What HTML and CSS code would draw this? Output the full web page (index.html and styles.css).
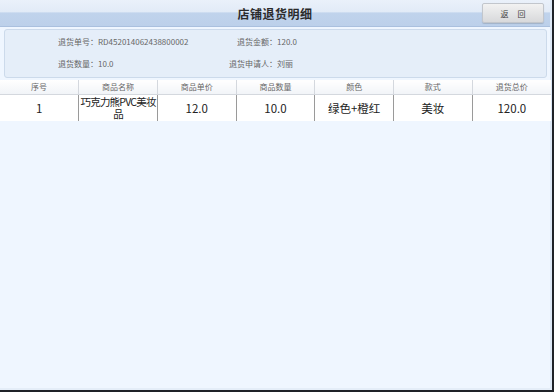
FILE: index.html
```html
<!DOCTYPE html>
<html lang="zh-CN">

<head>
    <meta charset="UTF-8">
    <meta name="viewport" content="width=device-width, initial-scale=1.0">
    <title>店铺退货明细</title>
    <link rel="stylesheet" href="styles.css">
</head>

<body>
    <div class="screen">
        <div class="title-bar">
            <h1>店铺退货明细</h1>
            <button class="back-btn">返<span class="gap"></span>回</button>
        </div>

        <div class="info-panel">
            <div class="info-row">
                <span class="info-left">退货单号：RD452014062438800002</span>
                <span class="info-label">退货金额：</span><span>120.0</span>
            </div>
            <div class="info-row">
                <span class="info-left">退货数量：10.0</span>
                <span class="info-label">退货申请人：</span><span>刘丽</span>
            </div>
        </div>

        <table class="detail-table">
            <thead>
                <tr>
                    <th>序号</th>
                    <th>商品名称</th>
                    <th>商品单价</th>
                    <th>商品数量</th>
                    <th>颜色</th>
                    <th>款式</th>
                    <th>退货总价</th>
                </tr>
            </thead>
            <tbody>
                <tr>
                    <td>1</td>
                    <td class="name-cell">巧克力熊PVC美妆品</td>
                    <td>12.0</td>
                    <td>10.0</td>
                    <td>绿色+橙红</td>
                    <td>美妆</td>
                    <td>120.0</td>
                </tr>
            </tbody>
        </table>
    </div>
</body>

</html>
```

FILE: styles.css
```css
* {
    box-sizing: border-box;
}

html,
body {
    margin: 0;
    padding: 0;
    height: 100%;
}

body {
    font-family: 'Noto Sans CJK SC', 'Noto Sans', sans-serif;
    background-color: #1f2228;
    color: #333;
}

.screen {
    width: 552px;
    height: 390px;
    background-color: #eff6ff;
    border-right: 2px solid #dde8f6;
    border-bottom: 2px solid #e4edf8;
}

.title-bar {
    height: 27px;
    display: flex;
    align-items: center;
    justify-content: center;
    position: relative;
    background: linear-gradient(to bottom, #eaf1fa 0%, #e2ebf7 45%, #c0d3ec 50%, #bcd0ea 100%);
    border-bottom: 1px solid #aac0de;
}

h1 {
    margin: 0;
    font-size: 12px;
    font-weight: bold;
    color: #2b2b2b;
    letter-spacing: 0.5px;
}

.back-btn {
    position: absolute;
    right: 6px;
    top: 3px;
    width: 62px;
    height: 20px;
    border: 1px solid #c2c6cc;
    border-radius: 2px;
    background: linear-gradient(to bottom, #f2f2f2, #d8d9db);
    font-family: inherit;
    font-size: 8px;
    color: #444;
    padding: 0;
    box-shadow: 0 1px 1px rgba(0, 0, 0, 0.15);
}

.back-btn .gap {
    display: inline-block;
    width: 9px;
}

.info-panel {
    margin: 2px 3px 2px 4px;
    height: 49px;
    background-color: #e5eef9;
    border: 1px solid #ccdaeb;
    border-radius: 3px;
    padding: 6px 0 0 53px;
    font-size: 8px;
    color: #666;
}

.info-row {
    display: flex;
    height: 22px;
}

.info-left {
    width: 132px;
}

.info-label {
    width: 87px;
    text-align: right;
}

.detail-table {
    width: 551px;
    border-collapse: collapse;
    table-layout: fixed;
}

.detail-table th {
    height: 14px;
    font-size: 8px;
    font-weight: normal;
    color: #666;
    background: linear-gradient(to bottom, #ffffff, #f1f4f8);
    border-left: 1px solid #d4d8de;
    border-bottom: 1px solid #d4d8de;
    padding: 0;
}

.detail-table td {
    height: 27px;
    font-size: 11.5px;
    color: #222;
    background-color: #fff;
    text-align: center;
    border-left: 1px solid #9a9a9a;
    padding: 0;
    line-height: 12px;
}

.detail-table th:first-child,
.detail-table td:first-child {
    border-left: none;
}

.detail-table .name-cell {
    font-size: 10.5px;
    letter-spacing: -0.8px;
}
```
